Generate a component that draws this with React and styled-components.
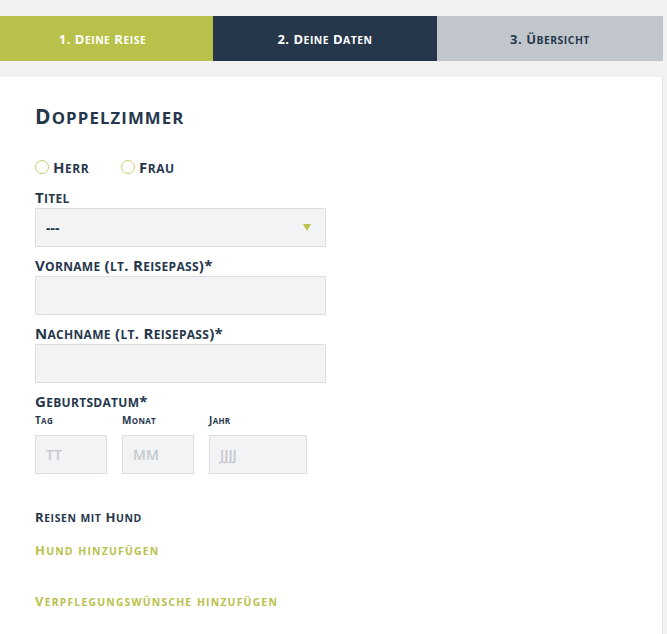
import React from 'react';
import styled, { createGlobalStyle } from 'styled-components';

const GlobalStyle = createGlobalStyle`
  html, body {
    margin: 0;
    padding: 0;
    background: #f1f1f1;
  }
  body {
    font-family: "Open Sans", Lato, sans-serif;
  }
`;

// lower-case letters shown as slightly smaller capitals
const Sc = styled.span`
  font-size: 0.8em;
  line-height: 1;
  text-transform: uppercase;
`;

const SmallCaps = ({ children }) => {
  const parts = String(children).split(/([a-zäöüß]+)/);
  return (
    <span>
      {parts.map((part, i) =>
        /^[a-zäöüß]+$/.test(part) ? <Sc key={i}>{part}</Sc> : part
      )}
    </span>
  );
};

const Page = styled.div`
  padding: 16px 4px 0 0;
  width: 667px;
  height: 634px;
  box-sizing: border-box;
  overflow: hidden;
`;

const Steps = styled.div`
  display: grid;
  grid-template-columns: 213px 224px 1fr;
  height: 45px;
`;

const colors = {
  done: { bg: '#b9c14a', fg: '#ffffff' },
  active: { bg: '#26374c', fg: '#ffffff' },
  todo: { bg: '#c1c6cc', fg: '#26374c' },
};

const Step = styled.div`
  display: flex;
  align-items: center;
  justify-content: center;
  padding-right: ${p => (p.$state === 'done' ? 8 : 0)}px;
  background: ${p => colors[p.$state].bg};
  color: ${p => colors[p.$state].fg};
  font-weight: 700;
  font-size: 13px;
  letter-spacing: 0.5px;
`;

const Card = styled.div`
  margin-top: 16px;
  background: #ffffff;
  padding: 26px 35px 0;
  min-height: 560px;
  border-right: 1px solid #e4e4e4;
`;

const Heading = styled.h2`
  margin: 0 0 28px;
  font-size: 21px;
  font-weight: 700;
  letter-spacing: 1.1px;
  color: #26374c;
  line-height: 26px;
`;

const RadioRow = styled.div`
  display: flex;
  gap: 32px;
  margin-bottom: 12px;
`;

const RadioOption = styled.label`
  display: flex;
  align-items: center;
  gap: 4px;
  font-size: 15px;
  font-weight: 700;
  color: #26374c;
  line-height: 20px;
  letter-spacing: 0.5px;
`;

const RadioCircle = styled.span`
  width: 14px;
  height: 14px;
  border-radius: 50%;
  border: 1.5px solid #c8cc6e;
  box-sizing: border-box;
  display: inline-block;
`;

const Label = styled.div`
  font-size: 15px;
  font-weight: 700;
  color: #26374c;
  line-height: 16px;
  margin-bottom: ${p => p.$mb ?? 3}px;
  letter-spacing: 0.3px;
`;

const Field = styled.div`
  width: ${p => p.$width || 291}px;
  height: 39px;
  box-sizing: border-box;
  background: #f2f3f5;
  border: 1px solid #dcdee1;
  display: flex;
  align-items: center;
  padding: 0 10px;
  margin-bottom: ${p => p.$mb ?? 10}px;
  font-size: 14px;
  font-weight: ${p => (p.$placeholder ? 600 : 700)};
  color: ${p => (p.$placeholder ? '#c5c8cd' : '#26374c')};
`;

const SelectValue = styled.span`
  flex: 1;
`;

const Arrow = styled.span`
  width: 0;
  height: 0;
  border-left: 4px solid transparent;
  border-right: 4px solid transparent;
  border-top: 7px solid #b9c14a;
  margin-right: 4px;
`;

const DateRow = styled.div`
  display: flex;
  gap: 15px;
`;

const DateCol = styled.div`
  display: flex;
  flex-direction: column;
`;

const SubLabel = styled.div`
  font-size: 10px;
  font-weight: 700;
  color: #26374c;
  line-height: 14px;
  margin-bottom: 8px;
  letter-spacing: 0.3px;
`;

const Plain = styled.div`
  margin-top: 34px;
  font-size: 13px;
  font-weight: 700;
  color: #26374c;
  line-height: 18px;
  letter-spacing: 0.6px;
`;

const ActionLink = styled.a`
  display: block;
  margin-top: ${p => p.$mt}px;
  font-size: 13px;
  font-weight: 700;
  color: #b9c14a;
  line-height: 18px;
  letter-spacing: 1.2px;
  text-decoration: none;
  cursor: pointer;
`;

export default function App() {
  return (
    <>
      <GlobalStyle />
      <Page>
        <Steps>
          <Step $state="done"><SmallCaps>1. Deine Reise</SmallCaps></Step>
          <Step $state="active"><SmallCaps>2. Deine Daten</SmallCaps></Step>
          <Step $state="todo"><SmallCaps>3. Übersicht</SmallCaps></Step>
        </Steps>
        <Card>
          <Heading><SmallCaps>Doppelzimmer</SmallCaps></Heading>
          <RadioRow>
            <RadioOption><RadioCircle /><SmallCaps>Herr</SmallCaps></RadioOption>
            <RadioOption><RadioCircle /><SmallCaps>Frau</SmallCaps></RadioOption>
          </RadioRow>
          <Label><SmallCaps>Titel</SmallCaps></Label>
          <Field>
            <SelectValue>---</SelectValue>
            <Arrow />
          </Field>
          <Label><SmallCaps>Vorname (lt. Reisepass)*</SmallCaps></Label>
          <Field />
          <Label><SmallCaps>Nachname (lt. Reisepass)*</SmallCaps></Label>
          <Field />
          <Label $mb={4}><SmallCaps>Geburtsdatum*</SmallCaps></Label>
          <DateRow>
            <DateCol>
              <SubLabel><SmallCaps>Tag</SmallCaps></SubLabel>
              <Field $width={72} $mb={0} $placeholder>TT</Field>
            </DateCol>
            <DateCol>
              <SubLabel><SmallCaps>Monat</SmallCaps></SubLabel>
              <Field $width={72} $mb={0} $placeholder>MM</Field>
            </DateCol>
            <DateCol>
              <SubLabel><SmallCaps>Jahr</SmallCaps></SubLabel>
              <Field $width={98} $mb={0} $placeholder>JJJJ</Field>
            </DateCol>
          </DateRow>
          <Plain><SmallCaps>Reisen mit Hund</SmallCaps></Plain>
          <ActionLink $mt={15}><SmallCaps>Hund hinzufügen</SmallCaps></ActionLink>
          <ActionLink $mt={33}><SmallCaps>Verpflegungswünsche hinzufügen</SmallCaps></ActionLink>
        </Card>
      </Page>
    </>
  );
}
